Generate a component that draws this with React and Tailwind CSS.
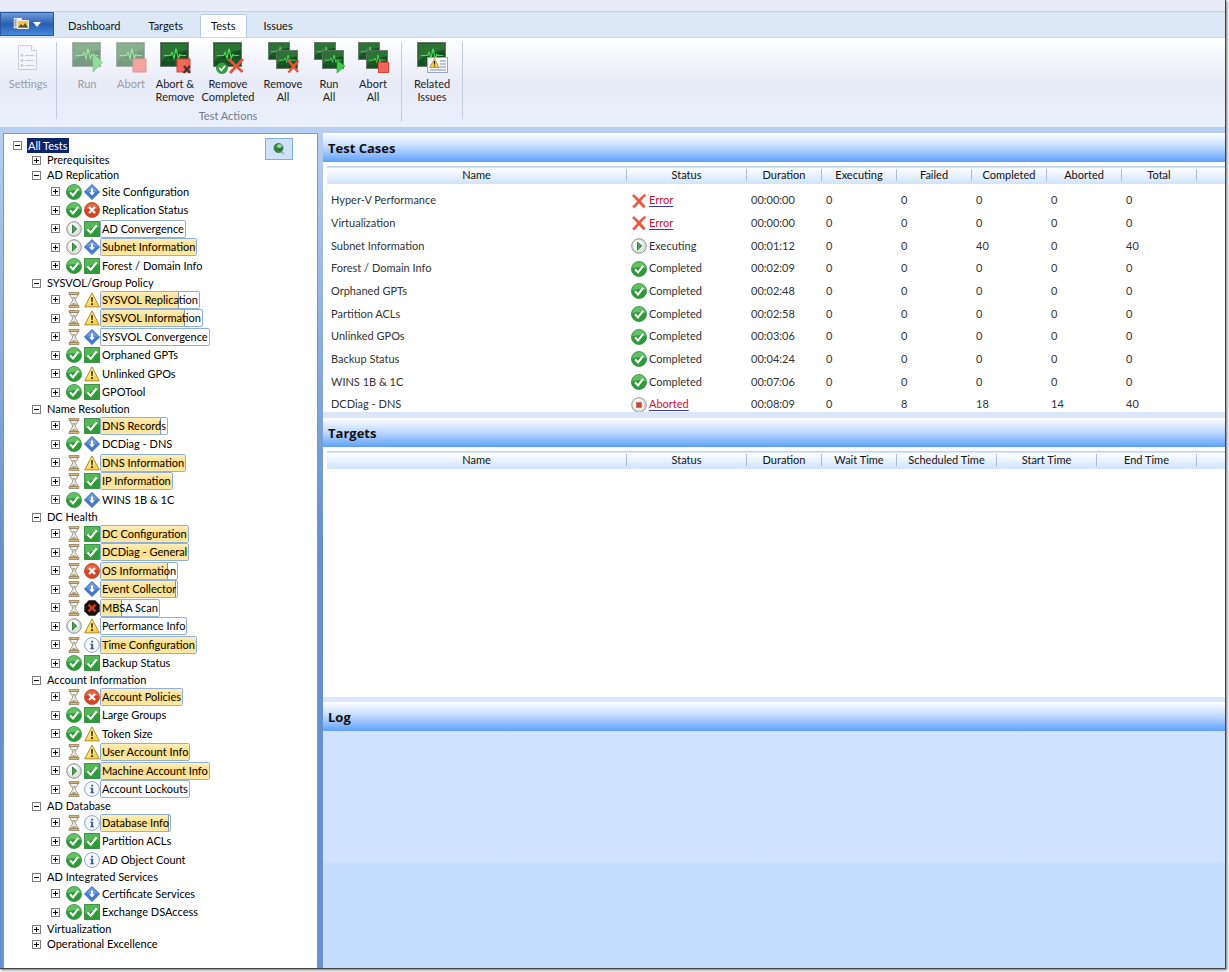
import React, { useState } from "react";

// width of each tree entry's yellow bar is its progress in percent
const tree = [
  { name: "Prerequisites" },
  {
    name: "AD Replication",
    items: [
      { name: "Site Configuration", state: "done", result: "down" },
      { name: "Replication Status", state: "done", result: "error" },
      { name: "AD Convergence", state: "running", result: "pass", progress: 0 },
      { name: "Subnet Information", state: "running", result: "down", progress: 100 },
      { name: "Forest / Domain Info", state: "done", result: "pass" },
    ],
  },
  {
    name: "SYSVOL/Group Policy",
    items: [
      { name: "SYSVOL Replication", state: "waiting", result: "warning", progress: 80 },
      { name: "SYSVOL Information", state: "waiting", result: "warning", progress: 83 },
      { name: "SYSVOL Convergence", state: "waiting", result: "down", progress: 0 },
      { name: "Orphaned GPTs", state: "done", result: "pass" },
      { name: "Unlinked GPOs", state: "done", result: "warning" },
      { name: "GPOTool", state: "done", result: "pass" },
    ],
  },
  {
    name: "Name Resolution",
    items: [
      { name: "DNS Records", state: "waiting", result: "pass", progress: 91 },
      { name: "DCDiag - DNS", state: "done", result: "down" },
      { name: "DNS Information", state: "waiting", result: "warning", progress: 100 },
      { name: "IP Information", state: "waiting", result: "pass", progress: 100 },
      { name: "WINS 1B & 1C", state: "done", result: "down" },
    ],
  },
  {
    name: "DC Health",
    items: [
      { name: "DC Configuration", state: "waiting", result: "pass", progress: 100 },
      { name: "DCDiag - General", state: "waiting", result: "pass", progress: 100 },
      { name: "OS Information", state: "waiting", result: "error", progress: 88 },
      { name: "Event Collector", state: "waiting", result: "down", progress: 99 },
      { name: "MBSA Scan", state: "waiting", result: "critical", progress: 37 },
      { name: "Performance Info", state: "running", result: "warning", progress: 0 },
      { name: "Time Configuration", state: "waiting", result: "info", progress: 100 },
      { name: "Backup Status", state: "done", result: "pass" },
    ],
  },
  {
    name: "Account Information",
    items: [
      { name: "Account Policies", state: "waiting", result: "error", progress: 100 },
      { name: "Large Groups", state: "done", result: "pass" },
      { name: "Token Size", state: "done", result: "warning" },
      { name: "User Account Info", state: "waiting", result: "warning", progress: 100 },
      { name: "Machine Account Info", state: "running", result: "pass", progress: 100 },
      { name: "Account Lockouts", state: "waiting", result: "info", progress: 0 },
    ],
  },
  {
    name: "AD Database",
    items: [
      { name: "Database Info", state: "waiting", result: "info", progress: 98 },
      { name: "Partition ACLs", state: "done", result: "pass" },
      { name: "AD Object Count", state: "done", result: "info" },
    ],
  },
  {
    name: "AD Integrated Services",
    items: [
      { name: "Certificate Services", state: "done", result: "down" },
      { name: "Exchange DSAccess", state: "done", result: "pass" },
    ],
  },
  { name: "Virtualization" },
  { name: "Operational Excellence" },
];

const testCases = [
  ["Hyper-V Performance", "Error", "00:00:00", 0, 0, 0, 0, 0],
  ["Virtualization", "Error", "00:00:00", 0, 0, 0, 0, 0],
  ["Subnet Information", "Executing", "00:01:12", 0, 0, 40, 0, 40],
  ["Forest / Domain Info", "Completed", "00:02:09", 0, 0, 0, 0, 0],
  ["Orphaned GPTs", "Completed", "00:02:48", 0, 0, 0, 0, 0],
  ["Partition ACLs", "Completed", "00:02:58", 0, 0, 0, 0, 0],
  ["Unlinked GPOs", "Completed", "00:03:06", 0, 0, 0, 0, 0],
  ["Backup Status", "Completed", "00:04:24", 0, 0, 0, 0, 0],
  ["WINS 1B & 1C", "Completed", "00:07:06", 0, 0, 0, 0, 0],
  ["DCDiag - DNS", "Aborted", "00:08:09", 0, 8, 18, 14, 40],
];

const testColumns = [
  ["Name", "w-[300px]"],
  ["Status", "w-[120px]"],
  ["Duration", "w-[75px]"],
  ["Executing", "w-[75px]"],
  ["Failed", "w-[75px]"],
  ["Completed", "w-[75px]"],
  ["Aborted", "w-[75px]"],
  ["Total", "w-[75px]"],
];

const targetColumns = [
  ["Name", "w-[300px]"],
  ["Status", "w-[120px]"],
  ["Duration", "w-[75px]"],
  ["Wait Time", "w-[75px]"],
  ["Scheduled Time", "w-[100px]"],
  ["Start Time", "w-[100px]"],
  ["End Time", "w-[100px]"],
];

function StatusIcon({ type }) {
  return (
    <svg viewBox="0 0 16 16" className="w-4 h-4 shrink-0" aria-hidden="true">
      {type === "done" && (
        <>
          <circle cx="8" cy="8" r="7.6" fill="#2f9a3a" stroke="#1f7f2c" strokeWidth="0.6" />
          <path d="M1.2 7.5a6.8 6.8 0 0 1 13.6 0C11 5.8 5 6 1.2 7.5z" fill="#62bf63" />
          <path d="M4 8.2l3 3.2 5.2-6.6" fill="none" stroke="#fff" strokeWidth="2" />
        </>
      )}
      {type === "running" && (
        <>
          <circle cx="8" cy="8" r="7.3" fill="#dfe2df" stroke="#8f9492" strokeWidth="1" />
          <circle cx="7.2" cy="7" r="5" fill="#f8f9f8" />
          <path d="M6.500 4v8L10.800 8z" fill="#4aa550" stroke="#1e6c2a" strokeWidth="0.8" />
        </>
      )}
      {type === "stopped" && (
        <>
          <circle cx="8" cy="8" r="7.3" fill="#dcdcdc" stroke="#9d9896" strokeWidth="1" />
          <circle cx="7.5" cy="7.2" r="5.6" fill="#f4f2f1" />
          <rect x="5.500" y="5.500" width="5" height="5" fill="#cf4130" stroke="#b0604f" strokeWidth="0.6" />
        </>
      )}
      {type === "waiting" && (
        <>
          <path d="M4.2 2.5h7.6c0 3-2.6 4-2.6 5.5s2.6 2.5 2.6 5.5H4.2c0-3 2.6-4 2.6-5.500S4.200 5.500 4.200 2.500z" fill="#edf0f1" stroke="#777e82" strokeWidth="0.8" />
          <path d="M6 5h4L8 7.500zM5 13.300c.4-1.600 2-2.300 3-2.900 1 .6 2.600 1.300 3 2.900z" fill="#c9a568" />
          <path d="M3 .5h10v1.900H3zM3 13.600h10v1.900H3z" fill="#d9bf88" stroke="#86714d" strokeWidth="0.7" />
        </>
      )}
      {type === "pass" && (
        <>
          <path d="M.4.4h15.200v15.200H.4z" fill="#2f9a38" stroke="#248030" strokeWidth="0.8" />
          <path d="M1 1h14v5.500C10 6 5 8 1 10z" fill="#57b657" />
          <path d="M3.500 8.500l3.300 3.200 5.900-7.400" fill="none" stroke="#fff" strokeWidth="2.1" />
        </>
      )}
      {type === "down" && (
        <>
          <path d="M8 .4L15.600 8 8 15.600.4 8z" fill="#4079cb" stroke="#3768b4" strokeWidth="0.8" />
          <path d="M8 1.500L14 7.500H2z" fill="#709fdf" />
          <path d="M7 4.400h2v3.800h2L8 11.600 5 8.200h2z" fill="#fff" />
        </>
      )}
      {type === "error" && (
        <>
          <circle cx="8" cy="8" r="7.6" fill="#d34421" stroke="#b9391b" strokeWidth="0.6" />
          <path d="M1.500 7a6.600 6.600 0 0 1 13 0C10.500 5.800 5 6 1.500 7z" fill="#e36843" />
          <path d="M5 5l6 6M11 5l-6 6" stroke="#fff" strokeWidth="2.3" />
        </>
      )}
      {type === "critical" && (
        <>
          <path d="M4.800.3h6.400l4.500 4.500v6.400l-4.500 4.500H4.800L.3 11.200V4.800z" fill="#1d0f0b" />
          <path d="M4.600 4.600l6.800 6.800M11.400 4.600l-6.800 6.800" stroke="#c8421c" strokeWidth="2.5" />
        </>
      )}
      {type === "warning" && (
        <>
          <path d="M8 .9l7.300 14H.7z" fill="#f8d348" stroke="#b78d2e" strokeWidth="1" strokeLinejoin="round" />
          <path d="M8 2.500l3.500 6.800L2.800 13.500z" fill="#fce68a" />
          <path d="M7.100 5.300h1.800l-.3 5H7.400zM7.100 11.300h1.800v1.700H7.100z" fill="#2c2718" />
        </>
      )}
      {type === "info" && (
        <>
          <circle cx="8" cy="8" r="7.4" fill="#f6f9fd" stroke="#8298bd" strokeWidth="0.9" />
          <path d="M7.200 3.800h1.900v1.700H7.200zM6.200 6.700h2.900v4.500h1v1.100H6.200v-1.100h1V7.800h-1z" fill="#37549c" />
        </>
      )}
      {type === "cross" && (
        <path d="M2.600 1.400c2 1.300 4 3.300 5.500 4.900C9.800 4.200 12 2.200 14 1.300l.9 1.200c-1.900 1.500-3.700 3.500-5.100 5.500 1.600 2 3 3.900 4.600 5.200L12.700 15c-1.600-1.300-3.200-3.100-4.800-5-1.400 1.900-3 3.800-4.700 5L1.500 13.500c1.800-1.400 3.400-3.300 4.800-5.300C4.700 6.200 3 4.300 1.300 3z" fill="#e9573f" stroke="#e9573f" strokeWidth="0.5" />
      )}
    </svg>
  );
}

// one green monitor with its pulse line
function Screen({ x, y, w, h }) {
  return (
    <svg x={x} y={y} width={w} height={h} viewBox="0 0 30 26" preserveAspectRatio="none">
      <rect x="0.5" y="0.5" width="29" height="25" fill="#14501f" stroke="#6b776d" strokeWidth="1.2" />
      <path d="M1.500 1.500h27v7C20 9 10 13 1.500 19z" fill="#2c7436" />
      <path d="M8.500 2v22M15.500 2v22M22.500 2v22M2 8h26M2 19h26" stroke="#2f7139" strokeWidth="0.5" />
      <path d="M4 14h7l1.500-3 2 6 2-10 2.500 10 1.500-4 1.500 1h5" fill="none" stroke="#4ce05a" strokeWidth="1.2" />
    </svg>
  );
}

function MonitorIcon({ type }) {
  const double = type.endsWith("All");
  return (
    <svg viewBox="0 0 32 32" className="w-8 h-8" aria-hidden="true">
      {double ? (
        <>
          <Screen x={1} y={0} w={22} h={18} />
          <Screen x={9} y={8} w={22} h={19} />
        </>
      ) : (
        <Screen x={1} y={0} w={29} h={25} />
      )}
      {type === "run" && <path d="M22 11v19l9.500-9.500z" fill="#41c94a" stroke="#31a83c" strokeWidth="0.8" />}
      {type === "runAll" && <path d="M24 18v13l8-7z" fill="#3ccc47" stroke="#249a31" strokeWidth="0.6" />}
      {(type === "abort" || type === "abortRemove") && (
        <rect x="18" y="17" width="13" height="13" fill="#f4655a" stroke="#d9473b" />
      )}
      {type === "abortAll" && <rect x="21.500" y="20.500" width="10" height="10" fill="#f4655a" stroke="#d9473b" />}
      {type === "abortRemove" && <path d="M25 24l6 7M31 24l-6.500 7" stroke="#333" strokeWidth="2" />}
      {type === "removeCompleted" && (
        <>
          <circle cx="10" cy="26" r="5.6" fill="#33a03d" stroke="#1f7b2b" strokeWidth="0.6" />
          <path d="M7.200 26l2.200 2.400 3.600-4.600" fill="none" stroke="#fff" strokeWidth="1.6" />
          <path d="M16.500 17l14 13M31 17L18 31" stroke="#e9523b" strokeWidth="2.8" />
        </>
      )}
      {type === "removeAll" && <path d="M21 18l10 12M31.500 18.500L21.500 30.500" stroke="#e9523b" strokeWidth="2.6" />}
      {type === "related" && (
        <>
          <rect x="11.500" y="15.500" width="20" height="15" fill="#fbfcff" stroke="#9aa6bd" />
          <path d="M18.500 16.500l4.800 9h-9.600z" fill="#f6cf42" stroke="#a47c20" strokeWidth="0.7" />
          <path d="M18.500 19v3.500M18.500 23.400v1.200" stroke="#222" strokeWidth="1.2" />
          <path d="M24 19h6M24 22h6M24 25h6M14 28h16" stroke="#7589bd" strokeWidth="1" />
        </>
      )}
    </svg>
  );
}

function SettingsIcon() {
  return (
    <svg viewBox="0 0 32 32" className="w-8 h-8" aria-hidden="true">
      <path d="M6.500 3.500h13l5 5v19h-18z" fill="#f3f5fb" stroke="#a9afbf" />
      <path d="M19.500 3.500v5h5" fill="#fff" stroke="#a9afbf" />
      <path d="M13 13.500h9M13 18.500h9M13 23.500h9" stroke="#a3a9b9" />
      <circle cx="10" cy="13.500" r="1.300" fill="#9aa1b3" />
      <circle cx="10" cy="18.500" r="1.300" fill="#9aa1b3" />
      <circle cx="10" cy="23.500" r="1.300" fill="#9aa1b3" />
    </svg>
  );
}

function RibbonButton({ width, label, disabled, children }) {
  return (
    <button
      disabled={disabled}
      className={`${width} flex flex-col items-center leading-[13px] ${
        disabled ? "text-[#9a9ca3]" : "text-[#1c1c26]"
      }`}
    >
      <span className={`mb-[3px] ${disabled ? "opacity-55" : ""}`}>{children}</span>
      <span className="whitespace-pre-line">{label}</span>
    </button>
  );
}

function Toggle({ open, onClick, label }) {
  return (
    <button
      aria-label={label}
      aria-expanded={open}
      onClick={onClick}
      className="w-[9px] h-[9px] shrink-0 border border-[#7d7d7d] bg-white text-black"
    >
      <svg viewBox="0 0 7 7" className="block w-[7px] h-[7px]" shapeRendering="crispEdges">
        <path d={open ? "M1 3h5v1H1z" : "M1 3h5v1H1zM3 1h1v5H3z"} fill="currentColor" />
      </svg>
    </button>
  );
}

function TreeItem({ item }) {
  const tracked = item.progress !== undefined;
  return (
    <li className="flex items-center odd:h-[19px] even:h-[18px]">
      <Toggle open={false} label={`Expand ${item.name}`} />
      <span className="flex gap-[2px] ml-[6px]">
        <StatusIcon type={item.state} />
        <StatusIcon type={item.result} />
      </span>
      <span
        className={`relative h-[18px] leading-4 border rounded-xs pr-px ${
          tracked ? "border-[#8fb0dc] bg-white" : "border-transparent"
        }`}
      >
        {item.progress > 0 && (
          <span
            className={`absolute inset-y-0 left-0 bg-linear-to-b from-[#fdeebb] via-[#fcdc85] to-[#fde9a8] ${
              item.progress < 100 ? "border-r border-[#8b93a0]" : ""
            }`}
            style={{ width: `${item.progress}%` }}
          />
        )}
        <span className="relative pl-px">{item.name}</span>
      </span>
    </li>
  );
}

function TreeGroup({ group }) {
  const [open, setOpen] = useState(Boolean(group.items));
  return (
    <li>
      <div className="flex items-center gap-[5px] h-[15px]">
        <Toggle open={open} onClick={() => setOpen(!open)} label={`Toggle ${group.name}`} />
        <span className="px-px">{group.name}</span>
      </div>
      {open && group.items && (
        <ul className="ml-[19px] -mt-px mb-px">
          {group.items.map((item) => (
            <TreeItem key={item.name} item={item} />
          ))}
        </ul>
      )}
    </li>
  );
}

function Status({ value }) {
  const icons = { Error: "cross", Executing: "running", Completed: "done", Aborted: "stopped" };
  const linked = value === "Error" || value === "Aborted";
  return (
    <span className="flex items-center gap-[2px]">
      <StatusIcon type={icons[value]} />
      {linked ? (
        <a href="#log" className="text-[#cc1030] underline decoration-[#4038a8] underline-offset-2">
          {value}
        </a>
      ) : (
        value
      )}
    </span>
  );
}

function PanelTitle({ children }) {
  return (
    <h2 className="h-[29px] shrink-0 flex items-center pt-[3px] px-[5px] font-['Open_Sans','Noto_Sans',sans-serif] text-[13px] font-bold bg-linear-to-b from-white via-[#bcd8ff] to-[#5f9ffb]">
      {children}
    </h2>
  );
}

function DataTable({ columns, children }) {
  return (
    <table className="table-fixed w-full text-left">
      <thead>
        <tr className="bg-linear-to-b from-white to-[#cfe3fb] border-t border-[#b9d5ee]">
          {columns.map(([name, width]) => (
            <th key={name} className={`${width} h-[17px] p-0 font-normal`}>
              <div className="h-3 leading-3 text-center border-r border-[#a9bdd8]">{name}</div>
            </th>
          ))}
          <td />
        </tr>
      </thead>
      {children}
    </table>
  );
}

export default function App() {
  const [tab, setTab] = useState("Tests");
  const [rootOpen, setRootOpen] = useState(true);

  return (
    <div className="h-screen pr-[3px] pb-[3px] bg-[#f4f4f4] font-['Lato','Open_Sans',sans-serif] text-[11px] text-[#111]">
      <div className="h-full flex flex-col border-r border-b border-[#444] shadow-[1px_1px_2px_#777] bg-[#b8cff1]">
        {/* title strip and ribbon tabs */}
        <div className="h-3 shrink-0 bg-[#e8ecf8] border-b border-[#bfd2ea]" />
        <nav className="h-[25px] shrink-0 flex items-end bg-[#dce8f5]">
          <button
            aria-label="Application menu"
            className="w-[54px] h-6 mb-px flex items-center justify-center gap-1 border border-[#2a56a0] bg-linear-to-b from-[#6f9cdc] via-[#2a5dae] to-[#4289dd]"
          >
            <svg viewBox="0 0 16 14" className="w-4 h-[14px]" aria-hidden="true">
              <path d="M.5.500h9v11h-9z" fill="#e9eef6" stroke="#6d7480" strokeWidth="0.8" />
              <path d="M1.500 3h2M1.500 5h2M1.500 7h2M1.500 9h2" stroke="#57606f" />
              <path d="M4.500 3.500h11v8h-11z" fill="#f2c24c" stroke="#eee" />
              <path d="M5 10.500l3-3.500 2 2 2-3 3 4.500z" fill="#5d4b34" />
            </svg>
            <svg viewBox="0 0 8 5" className="w-2 h-[5px]" aria-hidden="true">
              <path d="M0 0h8L4 5z" fill="#fff" />
            </svg>
          </button>
          {["Dashboard", "Targets", "Tests", "Issues"].map((name) => (
            <button
              key={name}
              onClick={() => setTab(name)}
              className={`h-[23px] border border-b-0 rounded-t-xs ${
                tab === name ? "px-[10px] mx-[3px] bg-white border-[#b6cce6]" : "px-[13px] border-transparent"
              }`}
            >
              {name}
            </button>
          ))}
        </nav>
        <div className="h-[90px] shrink-0 flex pt-[4px] bg-linear-to-b from-white via-[#e8ebf8] to-[#e9effb] border-t border-[#c9d9ec]">
          <div className="flex border-r border-[#c0cbdc] mb-2">
            <RibbonButton width="w-14" label="Settings" disabled>
              <SettingsIcon />
            </RibbonButton>
          </div>
          <div className="flex flex-col justify-between pl-1 pr-[6px] border-r border-[#c0cbdc] mb-[5px]">
            <div className="flex items-start pl-1">
              <RibbonButton width="w-11" label="Run" disabled>
                <MonitorIcon type="run" />
              </RibbonButton>
              <RibbonButton width="w-11" label="Abort" disabled>
                <MonitorIcon type="abort" />
              </RibbonButton>
              <RibbonButton width="w-11" label={"Abort &\nRemove"}>
                <MonitorIcon type="abortRemove" />
              </RibbonButton>
              <RibbonButton width="w-[62px]" label={"Remove\nCompleted"}>
                <MonitorIcon type="removeCompleted" />
              </RibbonButton>
              <RibbonButton width="w-12" label={"Remove\nAll"}>
                <MonitorIcon type="removeAll" />
              </RibbonButton>
              <RibbonButton width="w-11" label={"Run\nAll"}>
                <MonitorIcon type="runAll" />
              </RibbonButton>
              <RibbonButton width="w-11" label={"Abort\nAll"}>
                <MonitorIcon type="abortAll" />
              </RibbonButton>
            </div>
            <div className="text-center leading-[13px] text-[#74798a]">Test Actions</div>
          </div>
          <div className="flex border-r border-[#c0cbdc] mb-2">
            <RibbonButton width="w-[60px]" label={"Related\nIssues"}>
              <MonitorIcon type="related" />
            </RibbonButton>
          </div>
        </div>

        <div className="flex-1 min-h-0 flex pt-[6px] pl-[3px] bg-linear-to-b from-[#b8cff1] via-[#6590cb] to-[#6792d2]">
          {/* test tree */}
          <aside className="w-[315px] shrink-0 flex justify-between items-start bg-white border border-b-0 border-[#6d9bd8] pt-1 pl-[9px] pr-6 overflow-hidden">
            <div className="text-black whitespace-nowrap">
              <div className="flex items-center gap-[5px] h-[15px]">
                <Toggle open={rootOpen} onClick={() => setRootOpen(!rootOpen)} label="Toggle All Tests" />
                <span className="px-px leading-[15px] bg-[#0b246a] text-white">All Tests</span>
              </div>
              {rootOpen && (
                <ul className="ml-[19px]">
                  {tree.map((group) => (
                    <TreeGroup key={group.name} group={group} />
                  ))}
                </ul>
              )}
            </div>
            <button
              aria-label="Pin"
              className="w-7 h-[22px] flex items-center justify-center border border-[#86acdd] bg-[#cfe2f9]"
            >
              <svg viewBox="0 0 14 14" className="w-[14px] h-[14px]" aria-hidden="true">
                <path d="M7 8l5 4" stroke="#a5adb8" strokeWidth="2" />
                <circle cx="6.500" cy="6" r="4.500" fill="#3b8c47" stroke="#276934" strokeWidth="0.8" />
                <ellipse cx="7.500" cy="4" rx="2.500" ry="1.800" fill="#a8dba8" />
                <path d="M3.500 6.500l3 2 3-1.500" fill="none" stroke="#1e5a2a" />
              </svg>
            </button>
          </aside>

          {/* result panels */}
          <main className="flex-1 min-w-0 flex flex-col ml-[5px] bg-[#dbe7f8]">
            <section className="h-[279px] shrink-0 bg-white overflow-hidden">
              <PanelTitle>Test Cases</PanelTitle>
              <div className="pt-1 pl-1">
                <DataTable columns={testColumns}>
                  <tbody className="before:block before:h-[6px] text-[#333]">
                    {testCases.map(([name, status, ...values]) => (
                      <tr key={name} className="h-[23px] nth-[3n+1]:h-[22px]">
                        <td className="p-0 pl-1">{name}</td>
                        <td className="p-0 pl-1">
                          <Status value={status} />
                        </td>
                        {values.map((value, i) => (
                          <td key={i} className="p-0 pl-1">
                            {value}
                          </td>
                        ))}
                        <td />
                      </tr>
                    ))}
                  </tbody>
                </DataTable>
              </div>
            </section>
            <section className="h-[279px] shrink-0 mt-[6px] bg-white overflow-hidden">
              <PanelTitle>Targets</PanelTitle>
              <div className="pt-1 pl-1">
                <DataTable columns={targetColumns} />
              </div>
            </section>
            <section id="log" className="flex-1 flex flex-col mt-[5px]">
              <PanelTitle>Log</PanelTitle>
              <div className="flex-1 bg-linear-to-b from-[#cfe2ff] from-55% to-[#c5deff] to-56%" />
            </section>
          </main>
        </div>
      </div>
    </div>
  );
}
